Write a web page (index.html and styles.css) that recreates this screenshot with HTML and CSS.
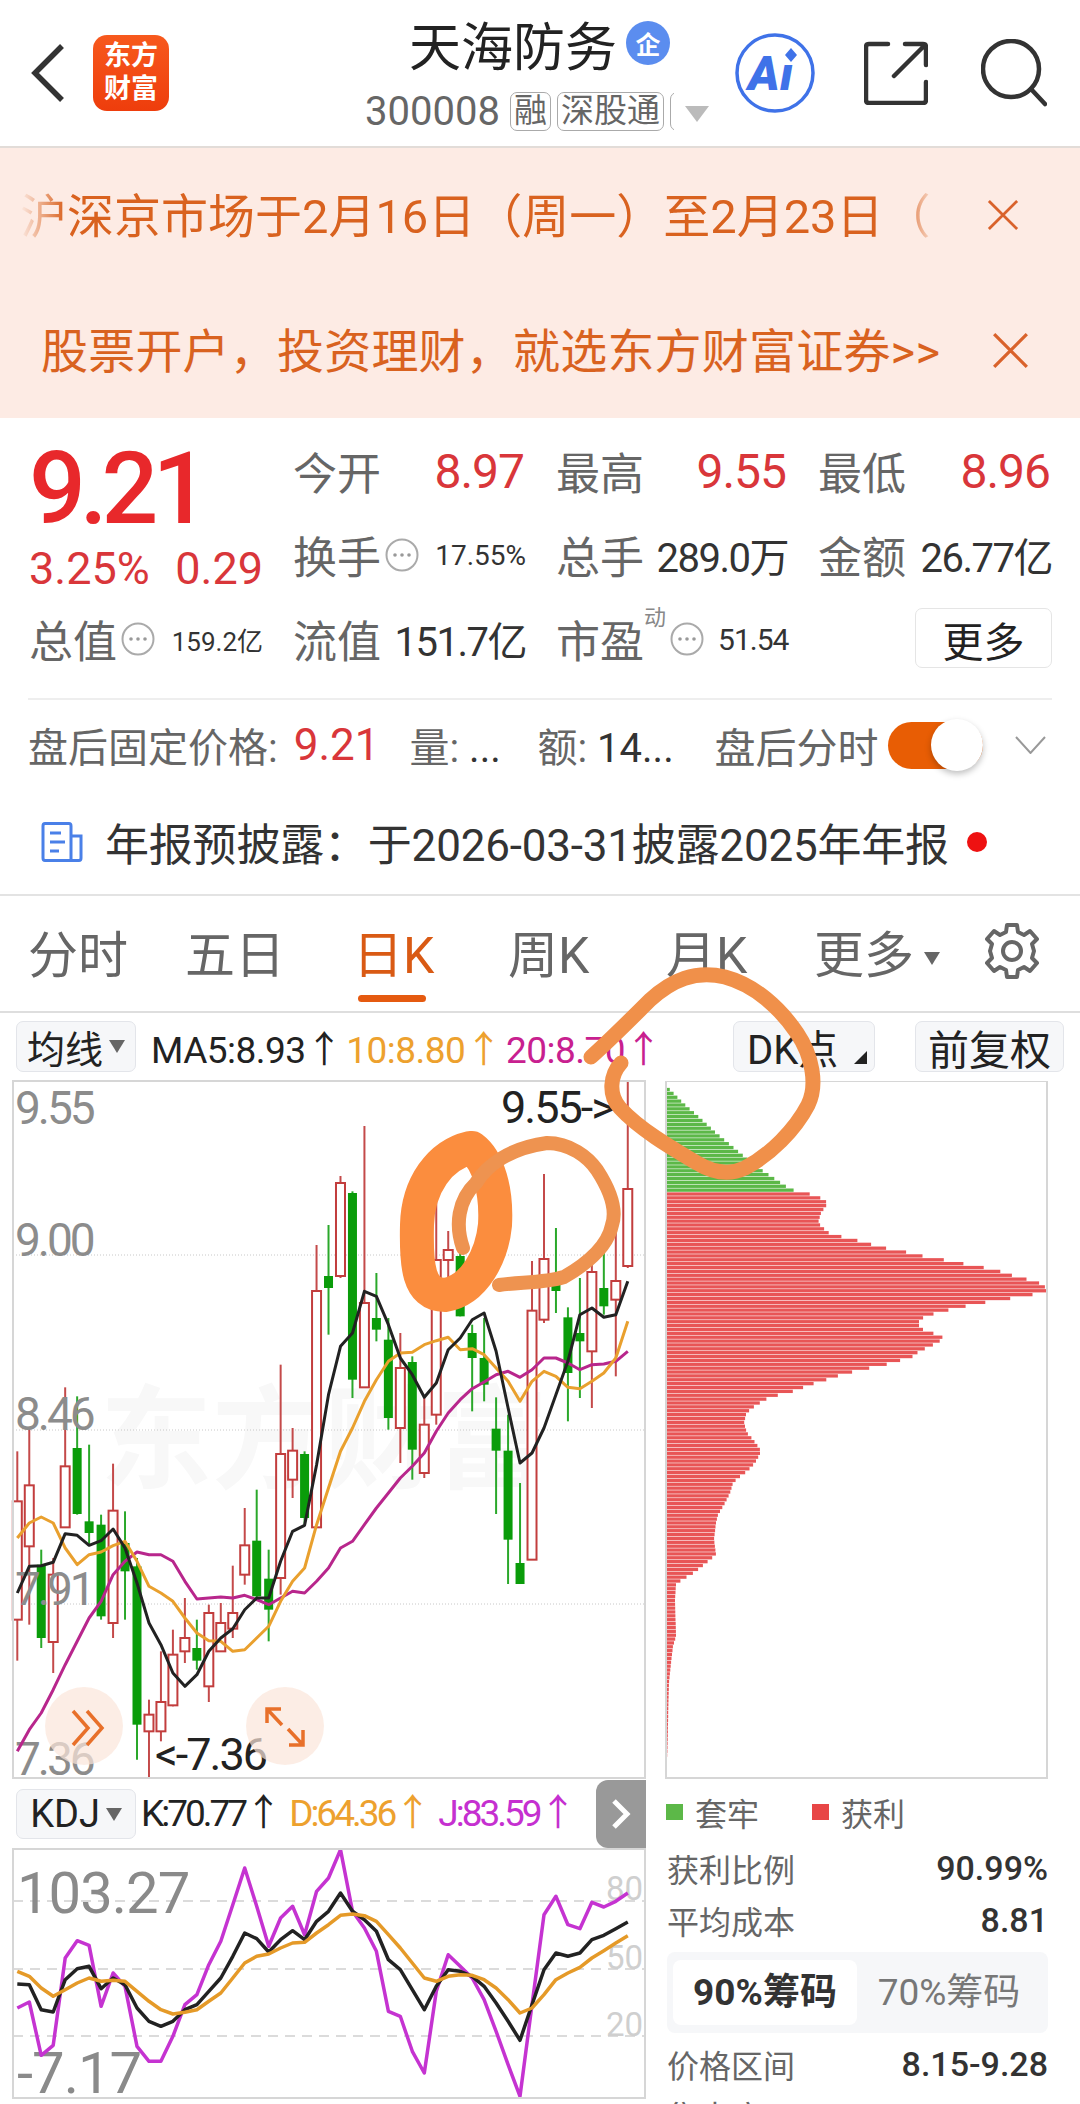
FILE: index.html
```html
<!DOCTYPE html>
<html lang="zh-CN">
<head>
  <meta charset="UTF-8" />
  <meta name="viewport" content="width=device-width, initial-scale=1.0"/>
  <title>天海防务</title>
  <link rel="stylesheet" href="styles.css">
</head>
<body>
  <svg class="defs" width="0" height="0">
    <symbol id="dots" viewBox="0 0 34 34">
      <circle cx="17" cy="17" r="15.5" fill="none" stroke="#aaa" stroke-width="2"/>
      <circle cx="10" cy="17" r="1.8" fill="#999"/>
      <circle cx="17" cy="17" r="1.8" fill="#999"/>
      <circle cx="24" cy="17" r="1.8" fill="#999"/>
    </symbol>
    <symbol id="close" viewBox="0 0 34 34">
      <path d="M2 2L32 32M32 2L2 32" fill="none" stroke="#d9622b" stroke-width="3"/>
    </symbol>
  </svg>

  <header class="top-bar">
    <svg class="back" width="34" height="60" viewBox="0 0 34 60"><path d="M31 3L4 30L31 57" fill="none" stroke="#333" stroke-width="5.5"/></svg>
    <div class="logo">东方<br>财富</div>
    <div class="stock-info">
      <div class="stock-name">天海防务<span class="qi-badge">企</span></div>
      <div class="stock-sub">
        <span class="stock-code">300008</span>
        <div class="stock-tags">
          <span class="tag">融</span>
          <span class="tag">深股通</span>
          <span class="tag tag-empty"></span>
        </div>
        <span class="tag-arrow"></span>
      </div>
    </div>
    <svg class="ai-icon" width="80" height="80" viewBox="0 0 80 80">
      <circle cx="40" cy="40" r="38" fill="none" stroke="#3f72e8" stroke-width="3.5"/>
      <text x="13" y="57" class="ai-text">Aı</text>
      <path d="M56 15L62 22L56 29L50 22Z" fill="#3f72e8"/>
    </svg>
    <svg class="share-icon" width="64" height="64" viewBox="0 0 64 64">
      <path d="M24 3H5Q2 3 2 6V59Q2 62 5 62H59Q62 62 62 59V41M41 3H59Q62 3 62 6V24M61 4L30 35" fill="none" stroke="#333" stroke-width="4.5" stroke-linecap="round"/>
    </svg>
    <svg class="search-icon" width="66" height="68" viewBox="0 0 66 68">
      <circle cx="30" cy="30" r="28" fill="none" stroke="#333" stroke-width="4.5"/>
      <path d="M50 50L64 65" fill="none" stroke="#333" stroke-width="4.5" stroke-linecap="round"/>
    </svg>
  </header>

  <section class="banner">
    <div class="banner-row">
      <div class="marquee">沪深京市场于2月16日（周一）至2月23日（</div>
      <svg class="close first" width="32" height="32"><use href="#close"/></svg>
    </div>
    <div class="banner-row">
      <div class="banner-link">股票开户，投资理财，就选东方财富证券&gt;&gt;</div>
      <svg class="close second" width="37" height="37"><use href="#close"/></svg>
    </div>
  </section>

  <section class="quote">
    <div class="price-box">
      <div class="price">9.21</div>
      <div class="change"><span>3.25%</span><span>0.29</span></div>
    </div>
    <div class="stat"><span class="label">今开</span><span class="val red">8.97</span></div>
    <div class="stat"><span class="label">最高</span><span class="val red">9.55</span></div>
    <div class="stat"><span class="label">最低</span><span class="val red">8.96</span></div>
    <div class="stat"><span class="label">换手</span><svg class="dots" width="34" height="34"><use href="#dots"/></svg><span class="val small">17.55%</span></div>
    <div class="stat"><span class="label">总手</span><span class="val">289.0万</span></div>
    <div class="stat"><span class="label">金额</span><span class="val">26.77亿</span></div>
    <div class="stat"><span class="label">总值</span><svg class="dots" width="34" height="34"><use href="#dots"/></svg><span class="val tiny">159.2亿</span></div>
    <div class="stat"><span class="label">流值</span><span class="val">151.7亿</span></div>
    <div class="stat"><span class="label">市盈</span><sup class="dyn">动</sup><svg class="dots" width="34" height="34"><use href="#dots"/></svg><span class="val pe">51.54</span></div>
    <div class="stat"><button class="more-btn">更多</button></div>
  </section>

  <div class="divider"></div>

  <section class="after-hours">
    <span class="ah-label">盘后固定价格:</span>
    <span class="ah-price">9.21</span>
    <span class="ah-vol"><i>量:</i> ...</span>
    <span class="ah-amt"><i>额:</i> 14...</span>
    <span class="ah-switch">盘后分时</span>
    <div class="toggle"><span class="knob"></span></div>
    <svg class="chevron" width="31" height="18" viewBox="0 0 31 18"><path d="M1 1L15.5 17L30 1" fill="none" stroke="#999" stroke-width="2"/></svg>
  </section>

  <section class="notice">
    <svg width="42" height="40" viewBox="0 0 42 40">
      <path d="M30 14H40V36Q40 38.500 38 38.500H4Q2 38.500 2 36V4Q2 1.500 4 1.500H28Q30 1.500 30 4V38" fill="none" stroke="#4a80e8" stroke-width="3"/>
      <path d="M9 11H20M9 20H24M9 29H18" fill="none" stroke="#4a80e8" stroke-width="3"/>
    </svg>
    <span class="notice-text">年报预披露：于2026-03-31披露2025年年报</span>
    <span class="notice-dot"></span>
  </section>

  <nav class="tabs">
    <div class="tab">分时</div>
    <div class="tab">五日</div>
    <div class="tab active">日K<span class="underline"></span></div>
    <div class="tab">周K</div>
    <div class="tab">月K</div>
    <div class="tab">更多<span class="tab-arrow"></span></div>
    <svg class="gear" width="58" height="58" viewBox="0 0 58 58">
      <path d="M24 3H34L35 10L41 13L47 9L54 17L49 22L51 29L49 36L54 41L47 49L41 45L35 48L34 55H24L23 48L17 45L11 49L4 41L9 36L7 29L9 22L4 17L11 9L17 13L23 10Z" fill="none" stroke="#666" stroke-width="4" stroke-linejoin="round"/>
      <circle cx="29" cy="29" r="9" fill="none" stroke="#666" stroke-width="4"/>
    </svg>
  </nav>

  <div class="toolbar">
    <button class="pick">均线<span class="pick-arrow"></span></button>
    <div class="ma">
      <span class="c-black">MA5:8.93↑</span>
      <span class="c-orange">10:8.80↑</span>
      <span class="c-magenta">20:8.70↑</span>
    </div>
    <button class="pick dk">DK点<span class="corner"></span></button>
    <button class="pick adj">前复权</button>
  </div>

  <div class="charts">
    <div class="col-left">
      <svg id="kline" class="kline" width="633" height="698" viewBox="13 1083 633 698"></svg>
      <div class="kdj-bar">
        <button class="pick kdj-pick">KDJ<span class="pick-arrow"></span></button>
        <div class="kdj-vals">
          <span class="c-black">K:70.77↑</span>
          <span class="c-orange">D:64.36↑</span>
          <span class="c-purple">J:83.59↑</span>
        </div>
        <div class="side-tab">
          <svg width="22" height="32" viewBox="0 0 22 32"><path d="M4 3L17 16L4 29" fill="none" stroke="#fff" stroke-width="5"/></svg>
        </div>
      </div>
      <svg id="kdj" class="kdj" width="633" height="250" viewBox="13 1851 633 250"></svg>
    </div>

    <div class="col-right">
      <svg id="chips" class="chips" width="383" height="698" viewBox="665 1083 383 698"></svg>
      <div class="legend">
        <span class="sq green"></span><span class="legend-a">套牢</span>
        <span class="sq red-sq"></span><span>获利</span>
      </div>
      <div class="kv"><span>获利比例</span><b>90.99%</b></div>
      <div class="kv"><span>平均成本</span><b>8.81</b></div>
      <div class="chip-tabs">
        <div class="chip-tab on">90%筹码</div>
        <div class="chip-tab">70%筹码</div>
      </div>
      <div class="kv range"><span>价格区间</span><b>8.15-9.28</b></div>
      <div class="kv"><span>集中度</span></div>
    </div>
  </div>

  <!-- hand drawn marks over the screenshot -->
  <svg class="marks" width="1080" height="2104" viewBox="0 0 1080 2104">
    <path class="blob" d="M470 1148C440 1155 418 1185 417 1225C416 1265 418 1295 445 1295C475 1290 492 1255 495 1225C497 1190 488 1160 472 1148Z"/>
    <path class="ring thin" d="M463 1248C455 1225 458 1200 476 1183C487 1165 510 1148 547 1143C570 1143 588 1157 597 1170C610 1190 617 1210 612 1225C608 1245 590 1262 564 1277C545 1283 520 1282 499 1285"/>
    <path class="ring" d="M621 1063C610 1075 608 1095 620 1108C640 1130 675 1150 697 1163C712 1172 728 1176 745 1168C770 1155 795 1130 808 1105C818 1085 812 1055 797 1033C780 1008 755 985 725 977C695 970 672 980 650 1000C630 1020 610 1040 591 1057"/>
  </svg>

  <script src="script.js"></script>
</body>
</html>
```

FILE: styles.css
```css
* {
  box-sizing: border-box;
}

html, body {
  margin: 0;
  padding: 0;
}

body {
  position: relative;
  width: 1080px;
  height: 2104px;
  overflow: hidden;
  background-color: white;
  font-family: Roboto, "Noto Sans CJK SC", sans-serif;
  color: #333;
}

button {
  font-family: inherit;
  padding: 0;
}

.defs {
  position: absolute;
}

/* top bar */
.top-bar {
  display: flex;
  align-items: center;
  height: 148px;
  border-bottom: 2px solid #e2dcd8;
}

.back {
  margin-left: 31px;
}

.logo {
  width: 76px;
  height: 76px;
  margin-left: 28px;
  border-radius: 14px;
  background: linear-gradient(#f7591d, #ee3d0c);
  color: white;
  font-size: 27px;
  font-weight: 700;
  line-height: 33px;
  text-align: center;
  padding-top: 5px;
}

.stock-info {
  width: 344px;
  margin-left: 196px;
}

.stock-name {
  display: flex;
  align-items: center;
  margin-left: 44px;
  height: 64px;
  margin-top: 2px;
  font-size: 52px;
  color: #222;
}

.qi-badge {
  display: flex;
  align-items: center;
  justify-content: center;
  width: 44px;
  height: 44px;
  margin-left: 9px;
  border-radius: 50%;
  background-color: #5b8def;
  color: white;
  font-size: 25px;
  font-weight: 700;
}

.stock-sub {
  display: flex;
  align-items: center;
  height: 52px;
  margin-top: 10px;
}

.stock-code {
  font-size: 40px;
  color: #666;
  width: 145px;
}

.stock-tags {
  display: flex;
  gap: 6px;
  width: 164px;
  overflow: hidden;
}

.tag {
  flex: none;
  height: 39px;
  padding: 0 3px;
  border: 1px solid #aaa;
  border-radius: 7px;
  font-size: 33px;
  line-height: 36px;
  color: #666;
}

.tag-empty {
  width: 40px;
}

.tag-arrow {
  width: 0;
  height: 0;
  margin: 6px 0 0 11px;
  border-left: 12px solid transparent;
  border-right: 12px solid transparent;
  border-top: 16px solid #bbb;
}

.ai-icon {
  margin-left: 26px;
}

.ai-text {
  font-family: Roboto, sans-serif;
  font-size: 48px;
  font-weight: 900;
  font-style: italic;
  fill: #3f72e8;
}

.share-icon {
  margin-left: 49px;
  margin-top: -1px;
}

.search-icon {
  margin-left: 53px;
}

/* banner */
.banner {
  height: 270px;
  background-color: #fdebe4;
}

.banner-row {
  display: flex;
  align-items: center;
  height: 135px;
  padding-bottom: 6px;
}

.marquee {
  width: 917px;
  margin-left: 20px;
  overflow: hidden;
  white-space: nowrap;
  font-size: 47px;
  color: #d9621f;
  -webkit-mask-image: linear-gradient(to right, transparent, black 45px, black 880px, transparent);
  mask-image: linear-gradient(to right, transparent, black 45px, black 880px, transparent);
}

.banner-link {
  margin-left: 41px;
  white-space: nowrap;
  font-size: 47px;
  letter-spacing: 0.2px;
  color: #d9621f;
}

.close {
  margin-top: 5px;
}

.close.first {
  margin-left: 50px;
}

.close.second {
  margin-left: 52px;
}

/* quote */
.quote {
  display: grid;
  grid-template-columns: 234px 233px 232px 234px;
  grid-auto-rows: 84px;
  column-gap: 30px;
  padding: 11px 0 17px 29px;
}

.price-box {
  grid-row: span 2;
}

.price {
  height: 112px;
  font-size: 100px;
  font-weight: 500;
  line-height: 120px;
  letter-spacing: -6px;
  color: #e8282b;
}

.change {
  display: flex;
  justify-content: space-between;
  height: 56px;
  font-size: 45px;
  line-height: 56px;
  color: #d9363a;
}

.stat {
  display: flex;
  align-items: center;
  white-space: nowrap;
}

.label {
  flex: none;
  font-size: 44px;
  color: #666;
}

.val {
  margin-left: auto;
  font-size: 40px;
  letter-spacing: -1.5px;
  color: #333;
}

.val.red {
  margin-right: 2px;
  font-size: 48px;
  letter-spacing: -1px;
  color: #d9363a;
}

.val.small {
  font-size: 28px;
  letter-spacing: 0;
}

.val.tiny {
  font-size: 26px;
  letter-spacing: 0;
}

.val.pe {
  margin-left: 14px;
  font-size: 30px;
  letter-spacing: -1px;
}

.dots {
  margin-left: 4px;
  flex: none;
}

.dyn {
  align-self: flex-start;
  margin-top: 10px;
  font-size: 22px;
  line-height: 22px;
  color: #888;
}

.more-btn {
  width: 137px;
  height: 60px;
  margin-left: auto;
  margin-top: -2px;
  border: 1px solid #e5e5e5;
  border-radius: 7px;
  background-color: white;
  font-size: 41px;
  color: #222;
}

.divider {
  height: 2px;
  margin: 0 28px;
  background-color: #eee;
}

/* after hours */
.after-hours {
  display: flex;
  align-items: center;
  height: 90px;
  padding-left: 28px;
  font-size: 40px;
  color: #333;
}

.ah-label,
.ah-switch,
.after-hours i {
  font-style: normal;
  color: #666;
}

.ah-price {
  margin-left: 16px;
  font-size: 44px;
  color: #d9363a;
}

.ah-vol {
  margin-left: 30px;
  width: 96px;
}

.ah-amt {
  margin-left: 32px;
  width: 139px;
}

.ah-switch {
  margin-left: 38px;
  font-size: 41px;
}

.toggle {
  display: flex;
  justify-content: flex-end;
  align-items: center;
  width: 95px;
  height: 47px;
  margin-left: 10px;
  border-radius: 24px;
  background-color: #e85d04;
}

.knob {
  width: 52px;
  height: 52px;
  border-radius: 50%;
  background-color: white;
  box-shadow: 0 3px 6px rgba(0, 0, 0, 0.25);
}

.chevron {
  margin-left: 32px;
}

/* notice */
.notice {
  display: flex;
  align-items: center;
  height: 106px;
  padding-left: 41px;
  border-bottom: 2px solid #e3e3e3;
}

.notice-text {
  margin-left: 22px;
  font-size: 44px;
  letter-spacing: -0.2px;
  color: #333;
}

.notice-dot {
  width: 20px;
  height: 20px;
  margin-left: 18px;
  border-radius: 50%;
  background-color: #ee1111;
}

/* tabs */
.tabs {
  display: grid;
  grid-template-columns: 157px 168px 155px 158px 148px 169px auto;
  height: 117px;
  padding: 31px 0 0 28px;
  border-bottom: 2px solid #dedede;
}

.tab {
  height: 58px;
  font-size: 50px;
  line-height: 58px;
  color: #666;
}

.tab.active {
  color: #d95a14;
}

.underline {
  display: block;
  width: 68px;
  height: 7px;
  margin-top: 10px;
  margin-left: 5px;
  border-radius: 4px;
  background-color: #e55a10;
}

.tab-arrow {
  display: inline-block;
  width: 0;
  height: 0;
  margin-left: 10px;
  vertical-align: 8px;
  border-left: 8px solid transparent;
  border-right: 8px solid transparent;
  border-top: 13px solid #666;
}

.gear {
  margin-top: -5px;
}

/* toolbar */
.toolbar {
  display: flex;
  align-items: center;
  height: 68px;
  padding: 8px 16px 9px;
}

.pick {
  position: relative;
  flex: none;
  display: flex;
  align-items: center;
  justify-content: center;
  height: 51px;
  border: 1px solid #e3e5ea;
  border-radius: 7px;
  background-color: #f6f7f9;
  font-size: 38px;
  color: #222;
}

.toolbar .pick:first-child {
  width: 120px;
}

.pick-arrow {
  width: 0;
  height: 0;
  margin-left: 6px;
  border-left: 8px solid transparent;
  border-right: 8px solid transparent;
  border-top: 13px solid #666;
}

.ma {
  display: flex;
  gap: 4px;
  margin-left: 15px;
  font-size: 37px;
  letter-spacing: -0.5px;
  white-space: nowrap;
}

.c-black { color: #222; }
.c-orange { color: #eda12e; }
.c-magenta { color: #c8208f; }
.c-purple { color: #c530d0; }

.pick.dk {
  width: 142px;
  margin-left: auto;
  justify-content: flex-start;
  padding-left: 13px;
  font-size: 40px;
}

.corner {
  position: absolute;
  right: 7px;
  bottom: 7px;
  width: 0;
  height: 0;
  border-left: 13px solid transparent;
  border-bottom: 13px solid #222;
}

.pick.adj {
  width: 149px;
  margin-left: 40px;
  font-size: 41px;
}

/* charts */
.charts {
  display: flex;
  align-items: flex-start;
}

.col-left {
  flex: none;
  width: 650px;
}

.col-left svg.kline,
.col-left svg.kdj {
  display: block;
  margin-left: 13px;
  overflow: visible;
}

.kdj-bar {
  display: flex;
  align-items: flex-start;
  height: 70px;
  padding: 0 4px 0 16px;
}

.kdj-pick {
  width: 120px;
  height: 50px;
  margin-top: 10px;
}

.kdj-vals {
  display: flex;
  gap: 10px;
  margin-left: 5px;
  padding-top: 12px;
  font-size: 37px;
  line-height: 46px;
  letter-spacing: -3px;
  white-space: nowrap;
}

.side-tab {
  flex: none;
  display: flex;
  align-items: center;
  justify-content: center;
  width: 50px;
  height: 68px;
  margin-top: 1px;
  margin-left: auto;
  border-radius: 12px 0 0 12px;
  background-color: #999;
}

.col-right {
  width: 383px;
  margin-left: 15px;
}

.chips {
  display: block;
}

.legend {
  display: flex;
  align-items: center;
  height: 63px;
  padding: 3px 0 0 1px;
  font-size: 32px;
  color: #666;
}

.sq {
  width: 17px;
  height: 16px;
  margin-right: 12px;
}

.sq.green { background-color: #5cb848; }
.sq.red-sq { background-color: #e84646; }

.legend-a {
  margin-right: 53px;
}

.kv {
  display: flex;
  justify-content: space-between;
  align-items: center;
  height: 52px;
  padding-left: 2px;
  font-size: 32px;
  color: #666;
}

.kv b {
  font-size: 34px;
  font-weight: 500;
  color: #333;
}

.chip-tabs {
  display: flex;
  height: 81px;
  margin: 6px 0 5px 2px;
  padding: 8px 6px;
  border-radius: 8px;
  background-color: #f6f7f9;
}

.chip-tab {
  width: 184px;
  font-size: 37px;
  line-height: 65px;
  text-align: center;
  color: #777;
}

.chip-tab.on {
  border-radius: 8px;
  background-color: white;
  font-weight: 700;
  color: #333;
}

.kv.range {
  margin-bottom: -1px;
}

/* svg chart pieces, built in script.js */
.frame {
  fill: none;
  stroke: #d6d6d6;
  stroke-width: 2;
}

.grid-line {
  stroke: #c8c8c8;
  stroke-width: 1;
  stroke-dasharray: 1 2;
}

.grid-dash {
  stroke: #d0d0d0;
  stroke-width: 1.500;
  stroke-dasharray: 10 7;
}

.axis {
  font-size: 46px;
  letter-spacing: -3px;
  fill: #8c8c8c;
}

.axis-big {
  font-size: 58px;
  letter-spacing: -1px;
  fill: #8a8a8a;
}

.axis-right {
  font-size: 33px;
  fill: #cfcfcf;
}

.peak {
  font-size: 45px;
  letter-spacing: -2px;
  fill: #222;
}

.watermark {
  font-size: 112px;
  font-weight: 700;
  fill: #f8f8f8;
}

.wick-r { stroke: #c44a4a; stroke-width: 2; }
.wick-g { stroke: #2aa82a; stroke-width: 2; }
.body-r { fill: white; stroke: #c23d3d; stroke-width: 2; }
.body-g { fill: #0a9c0a; }

.line {
  fill: none;
  stroke-width: 3;
  stroke-linejoin: round;
}

.line.fat {
  stroke-width: 3.500;
}

.float-btn {
  fill: #fbe6da;
  fill-opacity: 0.7;
}

.float-icon {
  fill: none;
  stroke: #e8702a;
  stroke-width: 3.500;
}

/* hand drawn marks */
.marks {
  position: absolute;
  top: 0;
  left: 0;
  pointer-events: none;
}

.blob {
  fill: none;
  stroke: #fb8d3e;
  stroke-width: 34;
  stroke-linejoin: round;
}

.ring {
  fill: none;
  stroke: #f0904a;
  stroke-width: 15;
  stroke-linecap: round;
}

.ring.thin {
  stroke: #ee9350;
  stroke-width: 14;
}
```

FILE: script.js
```js
const SVG_NS = "http://www.w3.org/2000/svg";

// candles: [high, bodyTop, bodyBottom, low, colour]. y values are read off a 3x crop, so y = 1300 + v / 3
const candles = [
  [460,610,965,1088,"r"],[390,562,745,980,"r"],[755,800,1020,1050,"g"],[780,830,1032,1125,"r"],
  [268,505,688,690,"r"],[295,450,648,650,"g"],[440,670,705,740,"g"],[650,680,955,965,"g"],
  [497,638,975,1020,"r"],[640,735,820,965,"g"],[780,805,1280,1385,"g"],[1205,1250,1300,1440,"r"],
  [1060,1212,1300,1330,"r"],[995,1070,1222,1225,"r"],[900,1020,1060,1095,"r"],[965,1050,1088,1115,"g"],
  [920,945,1165,1212,"r"],[915,975,1060,1060,"r"],[803,945,992,1020,"r"],[630,742,830,860,"r"],
  [575,728,895,900,"g"],[755,842,935,1030,"g"],[200,468,840,890,"r"],[390,458,545,600,"r"],
  [460,468,660,680,"g"],[-159,-21,688,690,"r"],[-219,-66,-30,110,"g"],[-366,-345,-66,-60,"r"],
  [-320,-315,245,300,"g"],[-516,15,268,268,"r"],[-75,60,95,130,"g"],[60,125,360,395,"g"],
  [105,210,390,495,"r"],[175,192,455,545,"g"],[300,380,525,540,"r"],[-315,-114,350,380,"r"],
  [-201,-144,-114,-15,"r"],[-150,-126,55,55,"g"],[80,105,180,340,"g"],[60,180,260,310,"g"],
  [298,392,458,648,"g"],[350,458,725,858,"g"],[555,795,858,858,"g"],[-111,38,785,785,"r"],
  [-372,-117,65,75,"r"],[-210,-45,-21,45,"g"],[28,58,225,370,"g"],[-60,105,130,300,"g"],
  [-99,-78,160,330,"r"],[-141,-30,25,50,"g"],[-240,-51,5,235,"r"],[-651,-327,-96,-90,"r"]
];

const ma5 = [885,805,803,793,707,712,742,728,693,750,855,975,1040,1125,1165,1130,1060,1020,992,935,900,900,790,700,682,500,290,145,105,-20,-5,80,180,230,298,255,155,120,65,45,160,330,495,465,390,290,190,50,30,58,50,-50];
const ma10 = [720,675,657,675,750,800,770,762,743,730,790,865,885,910,960,1005,1028,1030,1060,1055,1020,985,910,850,810,680,570,460,390,310,245,190,165,163,140,128,118,155,152,170,210,250,310,250,220,235,268,272,250,225,180,70];
const ma20 = [1360,1295,1245,1175,1100,1030,960,910,830,790,762,770,770,790,850,903,900,897,900,892,905,920,900,880,885,850,810,750,730,680,630,585,540,505,465,400,345,305,272,252,230,220,238,215,180,180,195,215,200,198,190,160];

// kdj lines, same idea: y = 1780 + v / 3
const kLine = [618,620,695,702,605,572,565,632,600,620,690,730,745,730,695,680,640,600,535,465,482,522,485,458,485,430,400,345,400,425,460,545,575,635,695,625,575,580,595,625,675,730,787,680,575,525,535,525,485,472,452,432];
const dLine = [580,595,630,655,635,615,600,610,607,610,640,670,695,708,703,695,670,645,600,555,535,528,510,495,493,465,440,412,408,413,430,470,510,555,600,610,595,590,592,605,630,665,705,690,650,605,585,568,540,518,495,473];
const jLine = [690,672,832,802,540,488,502,685,585,625,805,850,850,775,680,650,560,490,380,270,385,505,420,385,470,340,300,215,400,450,520,700,715,820,885,640,530,565,600,665,760,860,955,680,410,355,440,452,373,387,370,345];

// chip profile: [v, width in px], y = 1000 + v / 3
const chipProfile = [
  [258,0],[310,17],[350,32],[400,50],[450,70],[500,90],[570,125],[575,134],[590,152],[610,162],[640,155],[670,152],
  [690,159],[705,165],[715,183],[730,200],[745,219],[755,237],[768,255],[780,277],[793,299],[805,320],[815,334],
  [828,347],[838,360],[850,373],[862,379],[875,381],[888,362],[900,337],[912,311],[925,292],[937,274],[948,262],
  [960,253],[985,253],[995,262],[1005,271],[1015,278],[1030,271],[1040,264],[1050,257],[1060,251],[1072,246],
  [1085,231],[1098,216],[1108,199],[1120,182],[1133,167],[1145,156],[1155,144],[1170,132],[1180,122],[1192,104],
  [1215,91],[1230,84],[1245,80],[1270,78],[1300,81],[1320,87],[1340,92],[1355,95],[1380,91],[1400,86],[1415,81],
  [1435,72],[1450,67],[1480,64],[1510,59],[1545,52],[1570,50],[1620,48],[1665,50],[1680,44],[1705,34],[1725,25],
  [1740,16],[1755,10],[1800,9],[1910,10],[1940,7],[1990,5],[2050,3],[2100,2.5],[2250,1.5],[2330,0]
];

function add(parent, tag, attrs, text) {
  const el = document.createElementNS(SVG_NS, tag);
  Object.keys(attrs).forEach(key => el.setAttribute(key, attrs[key]));
  if (text) el.textContent = text;
  parent.appendChild(el);
  return el;
}

function candleX(i) {
  return 17.3 + 11.97 * i;
}

function drawLine(parent, values, baseY, color, cls) {
  const points = values.map((v, i) => candleX(i).toFixed(1) + "," + (baseY + v / 3).toFixed(1)).join(" ");
  add(parent, "polyline", { points: points, stroke: color, class: cls });
}

function drawKline() {
  const svg = document.getElementById("kline");
  const y = v => 1300 + v / 3;

  add(svg, "text", { x: 100, y: 1482, class: "watermark" }, "东方财富");
  [1257, 1432, 1606].forEach(gy => add(svg, "line", { x1: 13, x2: 645, y1: gy, y2: gy, class: "grid-line" }));

  candles.forEach((c, i) => {
    const x = candleX(i);
    add(svg, "line", { x1: x, x2: x, y1: y(c[0]), y2: y(c[3]), class: "wick-" + c[4] });
    add(svg, "rect", { x: x - 4.5, y: y(c[1]), width: 9, height: y(c[2]) - y(c[1]), class: "body-" + c[4] });
  });

  [["9.55", 1126], ["9.00", 1258], ["8.46", 1432], ["7.91", 1607], ["7.36", 1777]].forEach(t => {
    add(svg, "text", { x: 15, y: t[1], class: "axis" }, t[0]);
  });

  drawLine(svg, ma20, 1300, "#b8268c", "line");
  drawLine(svg, ma10, 1300, "#e9a02e", "line");
  drawLine(svg, ma5, 1300, "#222", "line");

  add(svg, "text", { x: 501, y: 1125, class: "peak" }, "9.55->");
  add(svg, "text", { x: 155, y: 1772, class: "peak" }, "<-7.36");

  add(svg, "circle", { cx: 84, cy: 1728, r: 39, class: "float-btn" });
  add(svg, "path", { d: "M73 1713L88 1730L73 1747M87 1713L102 1730L87 1747", class: "float-icon" });
  add(svg, "circle", { cx: 285, cy: 1728, r: 39, class: "float-btn" });
  add(svg, "path", { d: "M267 1725V1711H281M267 1711L282 1727M303 1732V1747H289M303 1747L288 1731", class: "float-icon" });

  add(svg, "rect", { x: 13, y: 1083, width: 632, height: 697, class: "frame" });
}

function drawKdj() {
  const svg = document.getElementById("kdj");

  [1903, 1971, 2038].forEach(gy => add(svg, "line", { x1: 13, x2: 645, y1: gy, y2: gy, class: "grid-dash" }));

  add(svg, "text", { x: 17, y: 1915, class: "axis-big" }, "103.27");
  add(svg, "text", { x: 17, y: 2095, class: "axis-big" }, "-7.17");
  [["80", 1902], ["50", 1971], ["20", 2038]].forEach(t => {
    add(svg, "text", { x: 606, y: t[1], class: "axis-right" }, t[0]);
  });

  drawLine(svg, jLine, 1780, "#c533d1", "line fat");
  drawLine(svg, kLine, 1780, "#222", "line fat");
  drawLine(svg, dLine, 1780, "#e59a28", "line fat");

  add(svg, "rect", { x: 13, y: 1851, width: 632, height: 249, class: "frame" });
}

function chipWidth(v) {
  for (let i = 1; i < chipProfile.length; i++) {
    const a = chipProfile[i - 1];
    const b = chipProfile[i];
    if (v <= b[0]) return a[1] + (b[1] - a[1]) * (v - a[0]) / (b[0] - a[0]);
  }
  return 0;
}

function drawChips() {
  const svg = document.getElementById("chips");

  for (let y = 1086; y < 1778; y += 3.87) {
    const v = (y - 1000) * 3;
    add(svg, "rect", {
      x: 666,
      y: y.toFixed(2),
      width: chipWidth(v).toFixed(1),
      height: 3.3,
      fill: v < 572 ? "#5cb848" : "#e85556"
    });
  }

  add(svg, "rect", { x: 666, y: 1083, width: 381, height: 697, class: "frame" });
}

document.addEventListener("DOMContentLoaded", function () {
  drawKline();
  drawKdj();
  drawChips();
});
```
